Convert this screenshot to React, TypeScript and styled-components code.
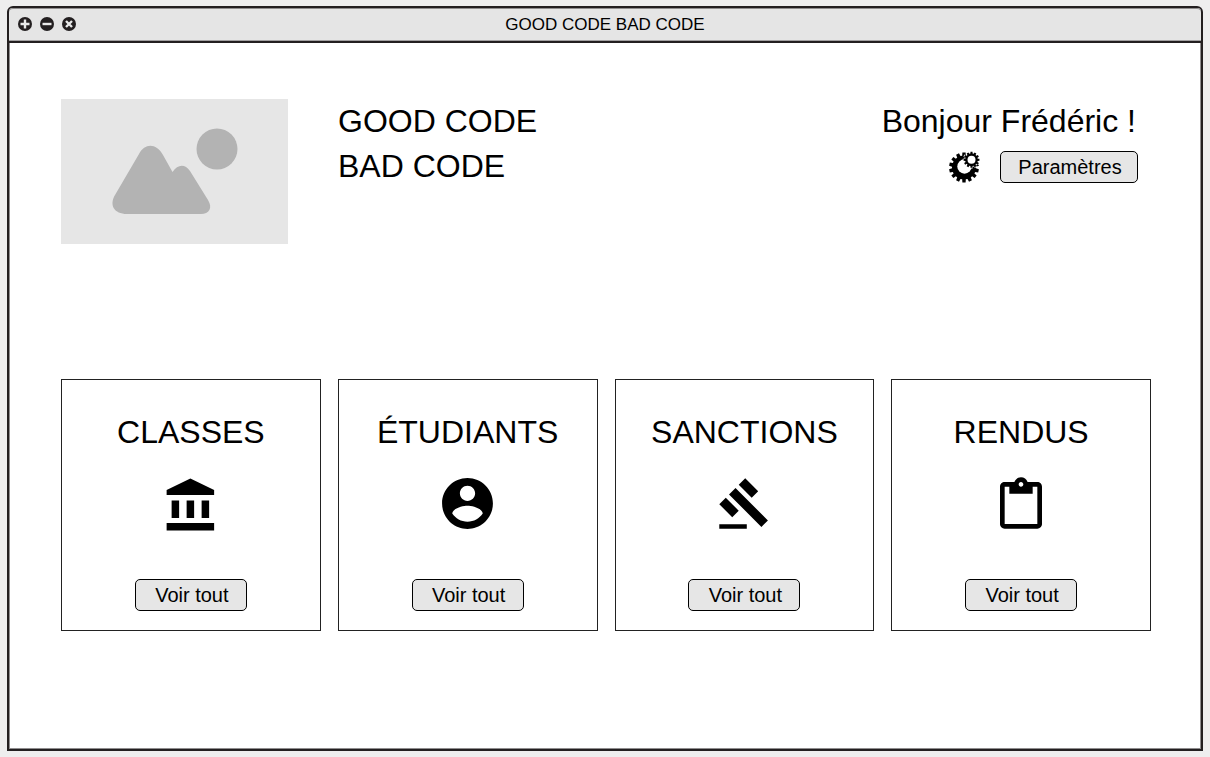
import React from "react";
import styled, { createGlobalStyle } from "styled-components";

const ink = "#231f20";

const GlobalStyle = createGlobalStyle`
  * { box-sizing: border-box; }
  body {
    margin: 0;
    background: #eeeeee;
    color: #000;
    font-family: "Liberation Sans", Arial, sans-serif;
  }
`;

const Page = styled.div`
  display: flex;
  min-height: 100vh;
  padding: 6px 7px;
`;

const Window = styled.div`
  display: flex;
  flex: 1;
  flex-direction: column;
  border: 2px solid ${ink};
  border-radius: 6px 6px 0 0;
  background: #fff;
  box-shadow: inset 0 0 0 1px #8f8d8e;
`;

const TitleBar = styled.header`
  display: grid;
  grid-template-columns: 1fr auto 1fr;
  align-items: center;
  height: 35px;
  padding: 0 9px;
  border-bottom: 2px solid ${ink};
  border-radius: 4px 4px 0 0;
  background: #e5e5e5;
  box-shadow: inset 0 1px 0 #8f8d8e, inset 0 -1px 0 #a3a1a2;
`;

const WindowControls = styled.div`
  display: flex;
  gap: 8px;
  padding-bottom: 2px;
`;

const ControlButton = styled.button`
  display: flex;
  padding: 0;
  border: 0;
  background: none;
`;

const WindowTitle = styled.span`
  font-size: 17px;
  line-height: 20px;
`;

const Content = styled.main`
  display: flex;
  flex-direction: column;
  gap: 135px;
  padding: 56px 50px 56px 52px;
`;

const Banner = styled.div`
  display: flex;
  align-items: flex-start;
  gap: 50px;
`;

const Placeholder = styled.svg`
  display: block;
  flex: none;
  width: 227px;
  height: 145px;
`;

const SiteName = styled.h1`
  margin: 0;
  font-size: 32px;
  font-weight: 400;
  line-height: 45px;
`;

const Account = styled.div`
  display: flex;
  flex-direction: column;
  align-items: flex-end;
  gap: 7px;
  margin-left: auto;
  padding-right: 13px;
`;

const Greeting = styled.p`
  margin: 0;
  padding-right: 2px;
  font-size: 32px;
  line-height: 45px;
`;

const Settings = styled.div`
  display: flex;
  align-items: center;
  gap: 20px;
`;

const Button = styled.button<{ $wide?: boolean }>`
  width: ${(p) => (p.$wide ? 138 : 112)}px;
  height: 32px;
  padding: 0 0 0 2px;
  border: 1px solid #000;
  border-radius: 5px;
  background: #e6e6e6;
  color: #000;
  font-family: inherit;
  font-size: 20px;
  line-height: 30px;
`;

const Cards = styled.div`
  display: grid;
  grid-template-columns: repeat(4, 1fr);
  gap: 17px;
`;

const Card = styled.section`
  display: flex;
  flex-direction: column;
  align-items: center;
  padding: 30px 16px 19px;
  border: 1px solid #222;
`;

const CardTitle = styled.h2`
  margin: 0;
  font-size: 32px;
  font-weight: 400;
  line-height: 45px;
`;

const CardIcon = styled.div`
  display: flex;
  align-items: center;
  justify-content: center;
  height: 60px;
  margin: 18px 0 46px;
`;

type ControlKind = "add" | "minimise" | "close";

const controlMarks: Record<ControlKind, React.ReactNode> = {
  add: <path d="M7 2.500v9M2.500 7h9" />,
  minimise: <path d="M2.500 7h9" />,
  close: <path d="M4 4l6 6M10 4l-6 6" />,
};

const Control = ({ kind, label }: { kind: ControlKind; label: string }) => (
  <ControlButton type="button" aria-label={label}>
    <svg width="14" height="14" viewBox="0 0 14 14" aria-hidden="true">
      <circle cx="7" cy="7" r="7" fill={ink} />
      <g stroke="#e9e9e9" strokeWidth="2.4" fill="none">
        {controlMarks[kind]}
      </g>
    </svg>
  </ControlButton>
);

const gearPath = (cx: number, cy: number, teeth: number, outer: number, inner: number) => {
  const step = (Math.PI * 2) / teeth;
  const points: string[] = [];
  for (let i = 0; i < teeth; i++) {
    const a = i * step - Math.PI / 2;
    [
      [inner, -0.34],
      [outer, -0.24],
      [outer, 0.24],
      [inner, 0.34],
    ].forEach(([r, k]) => {
      points.push(`${(cx + r * Math.cos(a + k * step)).toFixed(2)} ${(cy + r * Math.sin(a + k * step)).toFixed(2)}`);
    });
  }
  return `M${points.join("L")}Z`;
};

const Gears = () => (
  <svg width="32" height="32" viewBox="0 0 32 32" aria-hidden="true">
    <path d={gearPath(16, 16.5, 14, 15, 12)} />
    <circle cx="16.5" cy="15.5" r="7.2" fill="#fff" />
    <path d={gearPath(23.5, 8.8, 12, 8.8, 7.2)} fill="#fff" />
    <path d={gearPath(23.5, 8.8, 12, 8, 6.3)} />
    <circle cx="23.5" cy="8.8" r="4" fill="#fff" />
  </svg>
);

const sections = [
  {
    title: "CLASSES",
    size: 60,
    path: "M4.250 11v7h3v-7h-3zm6 0v7h3v-7h-3zM2.250 23h19v-3h-19v3zm14-12v7h3v-7h-3zM11.750 2.200L2.250 6.800v2h19v-2L11.750 2.200z",
  },
  {
    title: "ÉTUDIANTS",
    size: 61,
    path: "M12 2C6.480 2 2 6.480 2 12s4.480 10 10 10 10-4.480 10-10S17.520 2 12 2zm0 3c1.660 0 3 1.340 3 3s-1.340 3-3 3-3-1.340-3-3 1.340-3 3-3zm0 14.200c-2.500 0-4.710-1.280-6-3.220.03-1.990 4-3.080 6-3.080 1.990 0 5.970 1.090 6 3.080-1.290 1.940-3.500 3.220-6 3.220z",
  },
  {
    title: "SANCTIONS",
    size: 55,
    path: "M1 21h12v2H1zM5.245 8.070l2.830-2.827 14.140 14.142-2.828 2.828zM12.317 1l5.657 5.656-2.830 2.830-5.654-5.660zM3.825 9.485l5.657 5.657-2.828 2.828-5.657-5.657z",
  },
  {
    title: "RENDUS",
    size: 56,
    path: "M19 3h-4.180C14.400 1.840 13.300 1 12 1c-1.300 0-2.400.84-2.820 2H5c-1.100 0-2 .9-2 2v16c0 1.100.9 2 2 2h14c1.100 0 2-.9 2-2V5c0-1.100-.9-2-2-2zm-7 0c.55 0 1 .45 1 1s-.45 1-1 1-1-.45-1-1 .45-1 1-1zm7 18H5V5h2v3h10V5h2v16z",
  },
];

export default function App() {
  return (
    <>
      <GlobalStyle />
      <Page>
        <Window>
          <TitleBar>
            <WindowControls>
              <Control kind="add" label="Agrandir" />
              <Control kind="minimise" label="Réduire" />
              <Control kind="close" label="Fermer" />
            </WindowControls>
            <WindowTitle>GOOD CODE BAD CODE</WindowTitle>
          </TitleBar>
          <Content>
            <Banner>
              <Placeholder viewBox="0 0 227 145" aria-hidden="true">
                <rect width="227" height="145" fill="#e6e6e6" />
                <g fill="#b3b3b3">
                  <circle cx="156" cy="50" r="20.500" />
                  <path d="M78 55C84 44 95 44 102 56L111.500 73C117 65 124 65 129 72L147 101C152 109 148 115 140 115H66C53 115 48 106 54 96Z" />
                </g>
              </Placeholder>
              <SiteName>
                GOOD CODE
                <br />
                BAD CODE
              </SiteName>
              <Account>
                <Greeting>Bonjour Frédéric !</Greeting>
                <Settings>
                  <Gears />
                  <Button type="button" $wide>
                    Paramètres
                  </Button>
                </Settings>
              </Account>
            </Banner>
            <Cards>
              {sections.map((s) => (
                <Card key={s.title}>
                  <CardTitle>{s.title}</CardTitle>
                  <CardIcon>
                    <svg width={s.size} height={s.size} viewBox="0 0 24 24" aria-hidden="true">
                      <path d={s.path} />
                    </svg>
                  </CardIcon>
                  <Button type="button">Voir tout</Button>
                </Card>
              ))}
            </Cards>
          </Content>
        </Window>
      </Page>
    </>
  );
}
